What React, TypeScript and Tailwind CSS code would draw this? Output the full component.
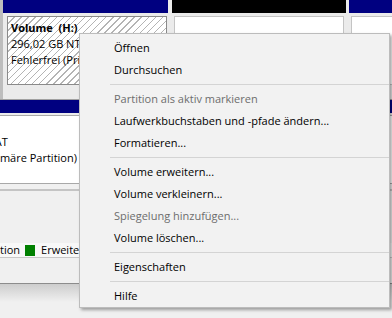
type Entry = { label?: string; disabled?: boolean; sep?: boolean };

const menu: Entry[] = [
  { label: "Öffnen" },
  { label: "Durchsuchen" },
  { sep: true },
  { label: "Partition als aktiv markieren", disabled: true },
  { label: "Laufwerkbuchstaben und -pfade ändern..." },
  { label: "Formatieren..." },
  { sep: true },
  { label: "Volume erweitern..." },
  { label: "Volume verkleinern..." },
  { label: "Spiegelung hinzufügen...", disabled: true },
  { label: "Volume löschen..." },
  { sep: true },
  { label: "Eigenschaften" },
  { sep: true },
  { label: "Hilfe" },
];

function ContextMenu() {
  return (
    <div className="absolute left-[79px] top-[33px] w-[311px] border border-[#bcbcbc] bg-[#f2f2f2] pt-[3px] shadow-[2px_2px_3px_rgba(0,0,0,0.35)]">
      {menu.map((m, i) =>
        m.sep ? (
          <div key={i} className="h-[7px] flex items-center pl-[30px]">
            <div className="h-px w-full bg-[#d4d4d4]" />
          </div>
        ) : (
          <div
            key={i}
            className={
              "h-[22px] flex items-center pl-[34px] whitespace-nowrap " +
              (m.disabled ? "text-[#6d6d6d]" : "text-black")
            }
          >
            {m.label}
          </div>
        )
      )}
    </div>
  );
}

export default function App() {
  return (
    <div className="relative w-[392px] h-[318px] overflow-hidden bg-[#f0f0f0] text-[11px] leading-[16px] font-['Segoe_UI','Open_Sans',sans-serif] text-black">
      {/* disk row 1 */}
      <div className="flex h-[99px] bg-[#ebebeb]">
        <div className="w-[3px] bg-[#bdbdbd]" />
        <div className="w-[165px] flex flex-col">
          <div className="h-[13px] bg-[#000080]" />
          <div className="pl-[4px] pr-[1px] pt-[3px]">
            <div className="h-[69px] border border-[#8a8a8a] bg-[repeating-linear-gradient(135deg,#ffffff_0_4px,#b4b4b4_4px_5px)] pl-[3px] pt-[3px] overflow-hidden whitespace-nowrap">
              <div className="font-bold">Volume&nbsp; (H:)</div>
              <div>296,02 GB NTFS</div>
              <div>Fehlerfrei (Primäre Partition)</div>
            </div>
          </div>
        </div>
        <div className="w-[4px]" />
        <div className="w-[174px] flex flex-col">
          <div className="h-[13px] bg-black" />
          <div className="px-[2px] pt-[3px]">
            <div className="h-[69px] border border-[#c4c4c4] bg-white" />
          </div>
        </div>
        <div className="w-[3px]" />
        <div className="flex-1 flex flex-col">
          <div className="h-[13px] bg-[#000080]" />
          <div className="pl-[2px] pt-[3px]">
            <div className="h-[69px] border border-[#c4c4c4] border-r-0 bg-white" />
          </div>
        </div>
      </div>
      <div className="h-px bg-[#a0a0a0]" />

      {/* disk row 2 */}
      <div className="h-[13px] bg-[#000080]" />
      <div className="h-[2px] bg-[#ebebeb]" />
      <div className="h-[69px] border-y border-[#a8a8a8] bg-white pt-[2px] overflow-hidden whitespace-nowrap">
        <div>&nbsp;</div>
        <div className="-ml-[11px]">FAT</div>
        <div className="-ml-[14px]">Primäre Partition)</div>
      </div>
      <div className="h-[5px]" />
      <div className="h-[2px] bg-[#c4c4c4]" />

      {/* legend */}
      <div className="h-[52px]" />
      <div className="h-[14px] bg-[#f8f8f8] flex items-center whitespace-nowrap">
        <span>tion</span>
        <span className="ml-[5px] w-[10px] h-[11px] bg-[#008000]" />
        <span className="ml-[6px]">Erweiterte Partition</span>
      </div>
      <div className="h-px bg-[#c8c8c8]" />
      <div className="h-[25px]" />
      <div className="h-px bg-[#8c8c8c]" />
      <div className="h-[18px] bg-gradient-to-b from-[#cdcdcd] to-[#f0f0f0]" />

      <ContextMenu />
    </div>
  );
}
